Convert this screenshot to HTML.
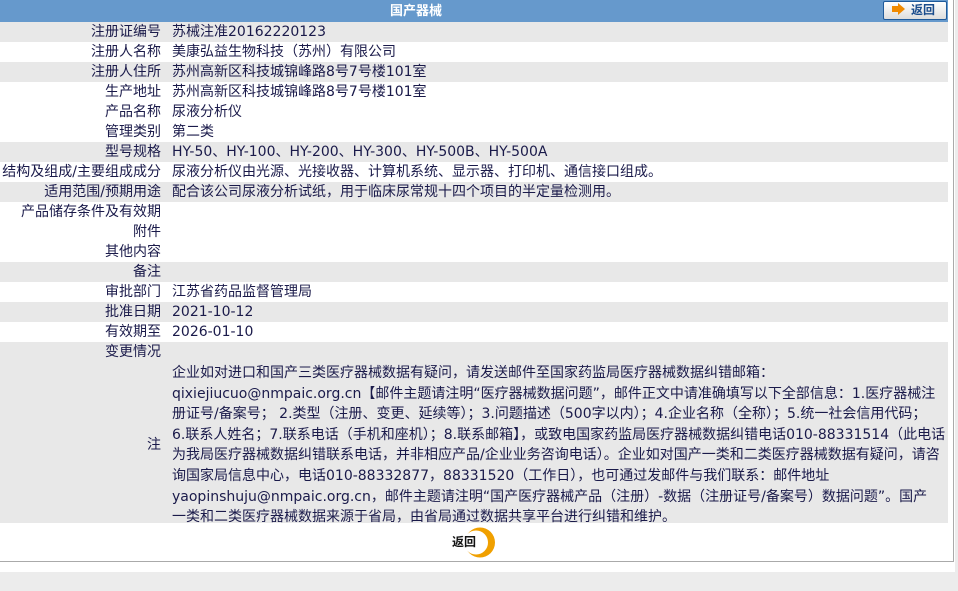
<!DOCTYPE html>
<html><head><meta charset="utf-8"><style>
body{margin:0;background:#ececec;width:958px;height:591px;overflow:hidden;font-family:"DejaVu Sans","Noto Sans CJK SC",sans-serif;}
.panel{position:absolute;left:0;top:0;width:955px;height:572px;background:#fff;}
.box{position:absolute;left:-1px;top:0;width:954px;height:561px;border-right:1px solid #aaa;border-bottom:1px solid #aaa;}
.hdr{position:absolute;left:0;top:0;width:948px;height:22px;background:#6699cc;color:#fff;font-weight:bold;font-size:13px;line-height:22px;font-family:"Liberation Sans","Noto Sans CJK SC",sans-serif;}
.hdr .t{position:absolute;left:390px;top:0;}
.btn{position:absolute;left:883px;top:1px;width:62px;height:17px;border:1px solid #1f5a9a;border-radius:2px;background:linear-gradient(#fff,#ddd);}
.btn .ar{position:absolute;left:8px;top:4px;width:6px;height:6px;background:#f08a00;}
.btn .ah{position:absolute;left:14px;top:1px;width:0;height:0;border-left:7px solid #f08a00;border-top:6px solid transparent;border-bottom:6px solid transparent;}
.btn .bt{position:absolute;left:27px;top:0;font-size:12px;font-weight:bold;color:#1a4c8c;line-height:17px;}
.row{position:absolute;left:0;width:948px;height:20px;font-size:14px;line-height:20px;color:#1a1a4a;}
.g{background:#e8e8e8;}
.l{position:absolute;right:787px;top:0;white-space:nowrap;}
.v{position:absolute;left:172px;top:0;white-space:nowrap;}
.big{position:absolute;left:0;top:362px;width:948px;height:161px;background:#e8e8e8;font-size:14px;color:#1a1a4a;}
.big .v{top:1px;line-height:20.6px;}
.big .l{top:72px;}
.ret{position:absolute;left:452px;top:533px;font-size:12px;font-weight:bold;color:#111;font-family:"Liberation Sans","Noto Sans CJK SC",sans-serif;}
.circ{position:absolute;left:454px;top:527px;width:42px;height:31px;}
</style></head><body>
<div class="panel"><div class="box"></div>
<div class="hdr"><span class="t">国产器械</span><div class="btn"><div class="ar"></div><div class="ah"></div><span class="bt">返回</span></div></div>
<div class="row g" style="top:22px"><span class="l">注册证编号</span><span class="v">苏械注准20162220123</span></div>
<div class="row" style="top:42px"><span class="l">注册人名称</span><span class="v">美康弘益生物科技（苏州）有限公司</span></div>
<div class="row g" style="top:62px"><span class="l">注册人住所</span><span class="v">苏州高新区科技城锦峰路8号7号楼101室</span></div>
<div class="row" style="top:82px"><span class="l">生产地址</span><span class="v">苏州高新区科技城锦峰路8号7号楼101室</span></div>
<div class="row" style="top:102px"><span class="l">产品名称</span><span class="v">尿液分析仪</span></div>
<div class="row" style="top:122px"><span class="l">管理类别</span><span class="v">第二类</span></div>
<div class="row g" style="top:142px"><span class="l">型号规格</span><span class="v">HY-50、HY-100、HY-200、HY-300、HY-500B、HY-500A</span></div>
<div class="row" style="top:162px"><span class="l">结构及组成/主要组成成分</span><span class="v">尿液分析仪由光源、光接收器、计算机系统、显示器、打印机、通信接口组成。</span></div>
<div class="row g" style="top:182px"><span class="l">适用范围/预期用途</span><span class="v">配合该公司尿液分析试纸，用于临床尿常规十四个项目的半定量检测用。</span></div>
<div class="row" style="top:202px"><span class="l">产品储存条件及有效期</span></div>
<div class="row" style="top:222px"><span class="l">附件</span></div>
<div class="row" style="top:242px"><span class="l">其他内容</span></div>
<div class="row g" style="top:262px"><span class="l">备注</span></div>
<div class="row" style="top:282px"><span class="l">审批部门</span><span class="v">江苏省药品监督管理局</span></div>
<div class="row g" style="top:302px"><span class="l">批准日期</span><span class="v">2021-10-12</span></div>
<div class="row" style="top:322px"><span class="l">有效期至</span><span class="v">2026-01-10</span></div>
<div class="row g" style="top:342px"><span class="l">变更情况</span></div>
<div class="big"><span class="l">注</span><div class="v">企业如对进口和国产三类医疗器械数据有疑问，请发送邮件至国家药监局医疗器械数据纠错邮箱：<br>qixiejiucuo@nmpaic.org.cn【邮件主题请注明“医疗器械数据问题”，邮件正文中请准确填写以下全部信息：1.医疗器械注<br>册证号/备案号； 2.类型（注册、变更、延续等）；3.问题描述（500字以内）；4.企业名称（全称）；5.统一社会信用代码；<br>6.联系人姓名；7.联系电话（手机和座机）；8.联系邮箱】，或致电国家药监局医疗器械数据纠错电话010-88331514（此电话<br>为我局医疗器械数据纠错联系电话，并非相应产品/企业业务咨询电话）。企业如对国产一类和二类医疗器械数据有疑问，请咨<br>询国家局信息中心，电话010-88332877，88331520（工作日），也可通过发邮件与我们联系：邮件地址<br>yaopinshuju@nmpaic.org.cn，邮件主题请注明“国产医疗器械产品（注册）-数据（注册证号/备案号）数据问题”。国产<br>一类和二类医疗器械数据来源于省局，由省局通过数据共享平台进行纠错和维护。</div></div>
<svg class="circ" viewBox="0 0 42 31"><circle cx="26" cy="15.5" r="15" fill="#f0a000"/><circle cx="22" cy="15.5" r="12" fill="#fff"/></svg>
<span class="ret">返回</span>
</div>
</body></html>
